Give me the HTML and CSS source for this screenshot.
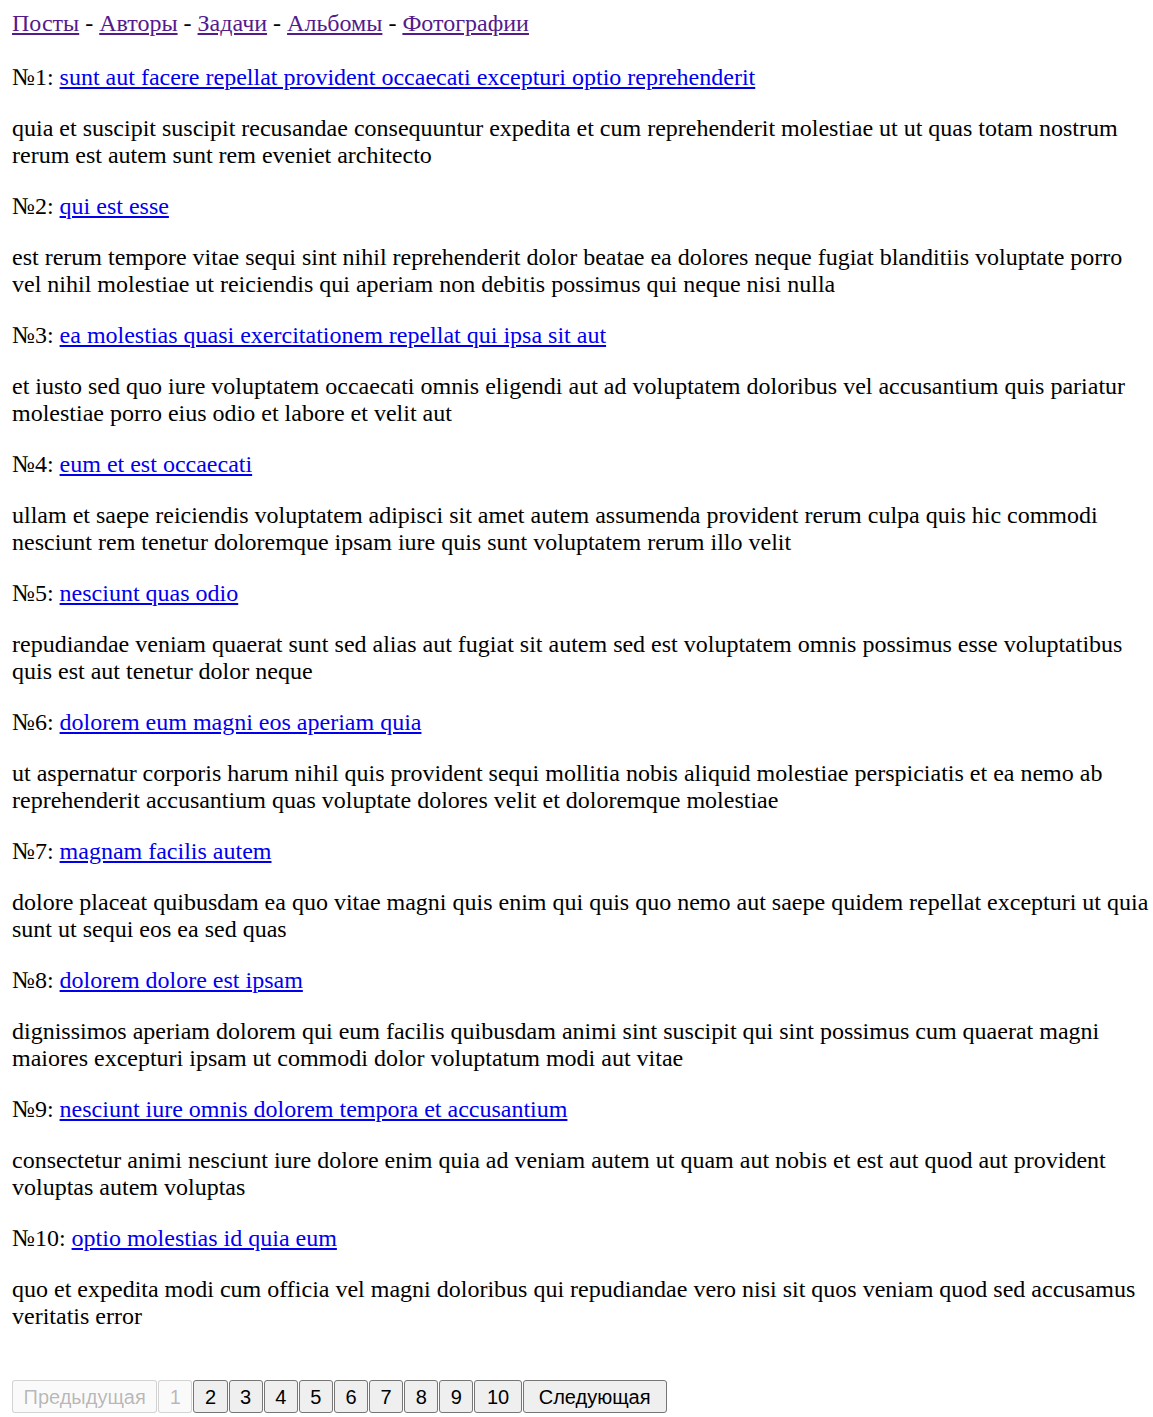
FILE: index.html
```html
<!DOCTYPE html>
<html lang="ru">
<head>
<meta charset="utf-8">
<title>Посты</title>
<link rel="stylesheet" href="styles.css">
</head>
<body>
<nav class="nav"><a class="nav-link" href="#">Посты</a> - <a class="nav-link" href="#">Авторы</a> - <a class="nav-link" href="#">Задачи</a> - <a class="nav-link" href="#">Альбомы</a> - <a class="nav-link" href="#">Фотографии</a></nav>
<div class="posts">
  <div class="post">
    <p class="post-title">№1: <a class="post-link" href="#">sunt aut facere repellat provident occaecati excepturi optio reprehenderit</a></p>
    <p class="post-body">quia et suscipit suscipit recusandae consequuntur expedita et cum reprehenderit molestiae ut ut quas totam nostrum rerum est autem sunt rem eveniet architecto</p>
  </div>
  <div class="post">
    <p class="post-title">№2: <a class="post-link" href="#">qui est esse</a></p>
    <p class="post-body">est rerum tempore vitae sequi sint nihil reprehenderit dolor beatae ea dolores neque fugiat blanditiis voluptate porro vel nihil molestiae ut reiciendis qui aperiam non debitis possimus qui neque nisi nulla</p>
  </div>
  <div class="post">
    <p class="post-title">№3: <a class="post-link" href="#">ea molestias quasi exercitationem repellat qui ipsa sit aut</a></p>
    <p class="post-body">et iusto sed quo iure voluptatem occaecati omnis eligendi aut ad voluptatem doloribus vel accusantium quis pariatur molestiae porro eius odio et labore et velit aut</p>
  </div>
  <div class="post">
    <p class="post-title">№4: <a class="post-link" href="#">eum et est occaecati</a></p>
    <p class="post-body">ullam et saepe reiciendis voluptatem adipisci sit amet autem assumenda provident rerum culpa quis hic commodi nesciunt rem tenetur doloremque ipsam iure quis sunt voluptatem rerum illo velit</p>
  </div>
  <div class="post">
    <p class="post-title">№5: <a class="post-link" href="#">nesciunt quas odio</a></p>
    <p class="post-body">repudiandae veniam quaerat sunt sed alias aut fugiat sit autem sed est voluptatem omnis possimus esse voluptatibus quis est aut tenetur dolor neque</p>
  </div>
  <div class="post">
    <p class="post-title">№6: <a class="post-link" href="#">dolorem eum magni eos aperiam quia</a></p>
    <p class="post-body">ut aspernatur corporis harum nihil quis provident sequi mollitia nobis aliquid molestiae perspiciatis et ea nemo ab reprehenderit accusantium quas voluptate dolores velit et doloremque molestiae</p>
  </div>
  <div class="post">
    <p class="post-title">№7: <a class="post-link" href="#">magnam facilis autem</a></p>
    <p class="post-body">dolore placeat quibusdam ea quo vitae magni quis enim qui quis quo nemo aut saepe quidem repellat excepturi ut quia sunt ut sequi eos ea sed quas</p>
  </div>
  <div class="post">
    <p class="post-title">№8: <a class="post-link" href="#">dolorem dolore est ipsam</a></p>
    <p class="post-body">dignissimos aperiam dolorem qui eum facilis quibusdam animi sint suscipit qui sint possimus cum quaerat magni maiores excepturi ipsam ut commodi dolor voluptatum modi aut vitae</p>
  </div>
  <div class="post">
    <p class="post-title">№9: <a class="post-link" href="#">nesciunt iure omnis dolorem tempora et accusantium</a></p>
    <p class="post-body">consectetur animi nesciunt iure dolore enim quia ad veniam autem ut quam aut nobis et est aut quod aut provident voluptas autem voluptas</p>
  </div>
  <div class="post">
    <p class="post-title">№10: <a class="post-link" href="#">optio molestias id quia eum</a></p>
    <p class="post-body">quo et expedita modi cum officia vel magni doloribus qui repudiandae vero nisi sit quos veniam quod sed accusamus veritatis error</p>
  </div>
</div>
<div class="pager">
  <button class="pager-btn" disabled>Предыдущая</button>
  <button class="pager-btn" disabled>1</button>
  <button class="pager-btn">2</button>
  <button class="pager-btn">3</button>
  <button class="pager-btn">4</button>
  <button class="pager-btn">5</button>
  <button class="pager-btn">6</button>
  <button class="pager-btn">7</button>
  <button class="pager-btn">8</button>
  <button class="pager-btn">9</button>
  <button class="pager-btn pager-btn--wide">10</button>
  <button class="pager-btn pager-btn--next">Следующая</button>
</div>
</body>
</html>
```

FILE: styles.css
```css
html {
  background: #ffffff;
}

body {
  margin: 10px 4px 12px 12px;
  font-family: "Liberation Serif", "Times New Roman", serif;
  font-size: 24px;
  color: #000000;
}

.nav {
  margin: 0;
}

.nav-link {
  color: #551a8b;
}

.posts {
  padding-top: 3px;
}

.post-title,
.post-body {
  margin: 24px 0;
}

.post-link {
  color: #0000ee;
}

.pager {
  display: flex;
  gap: 1px;
  align-items: flex-start;
  margin-top: 50px;
}

.pager-btn {
  box-sizing: border-box;
  font-family: "Liberation Sans", Arial, sans-serif;
  font-size: 20px;
  line-height: 24px;
  height: 33px;
  padding: 3px 10.5px;
  margin: 0;
  color: #000000;
  background: #efefef;
  border: 1.5px solid #767676;
  border-radius: 3px;
}

.pager-btn--wide {
  padding: 3px 11.5px;
}

.pager-btn--next {
  padding: 3px 15px;
}

.pager-btn:disabled {
  color: rgba(16, 16, 16, 0.3);
  background: rgba(239, 239, 239, 0.3);
  border-color: rgba(118, 118, 118, 0.3);
}
```
